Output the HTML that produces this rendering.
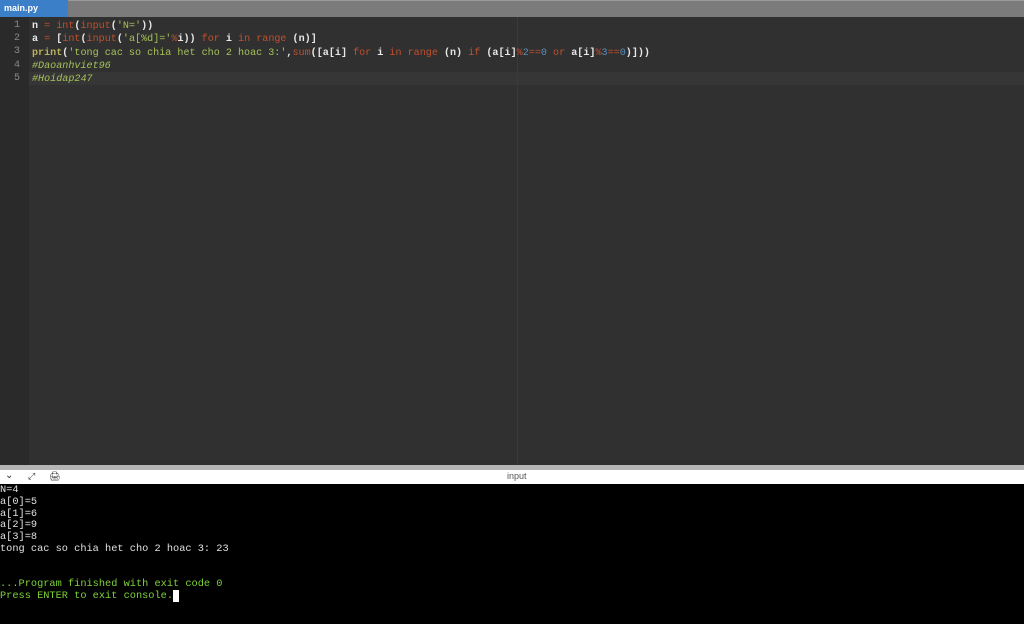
<!DOCTYPE html>
<html><head><style>
body{margin:0;width:1024px;height:624px;overflow:hidden;background:#000;position:relative;font-family:"Liberation Mono",monospace}
.top{position:absolute;left:0;top:0;width:1024px;height:17px;background:#7b7b7b;border-top:1px solid #999;box-sizing:border-box}
.tab{position:absolute;left:0;top:0;width:68px;height:17px;background:#3a7fc7;color:#fff;font:bold 9px "Liberation Sans",sans-serif;line-height:16px;padding-left:4px;box-sizing:border-box}
.ed{position:absolute;left:0;top:17px;width:1024px;height:448px;background:#303030}
.gut{position:absolute;left:0;top:0;width:29px;height:448px;background:#2a2a2a}
.vl{position:absolute;left:517px;top:0;width:1px;height:448px;background:#3a3a3a}
.cl{position:absolute;left:29px;top:55px;width:995px;height:13px;background:#363636}
.ln{position:absolute;left:0;width:20px;text-align:right;color:#8a8a8a;font-size:10px}
.code{position:absolute;left:32px;top:3px;font-size:10.1px;line-height:13.3px;color:#e8e8e8;white-space:pre;font-weight:bold}
.k{color:#c0502e;font-weight:normal}.s{color:#a6c25a;font-weight:normal}.c{color:#a6c25a;font-style:italic;font-weight:normal}.n{color:#5a8fc4;font-weight:normal}.p{color:#b8b05a}
.bar{position:absolute;left:0;top:465px;width:1024px;height:5px;background:#b5b5b5}
.tb{position:absolute;left:0;top:470px;width:1024px;height:14px;background:#fff;font:9px "Liberation Sans",sans-serif;color:#555}
.con{position:absolute;left:0;top:485px;font-size:10.3px;line-height:11.8px;color:#e0e0e0;white-space:pre}
.g{color:#7ed33a}
</style></head><body>
<div class="top"></div><div class="tab">main.py</div>
<div class="ed"><div class="gut"></div><div class="cl"></div><div class="vl"></div>
<div class="ln" style="top:3px">1</div><div class="ln" style="top:16px">2</div><div class="ln" style="top:29px">3</div><div class="ln" style="top:43px">4</div><div class="ln" style="top:56px">5</div>
<div class="code">n <span class="k">=</span> <span class="k">int</span>(<span class="k">input</span>(<span class="s">'N='</span>))
a <span class="k">=</span> [<span class="k">int</span>(<span class="k">input</span>(<span class="s">'a[%d]='</span><span class="k">%</span>i)) <span class="k">for</span> i <span class="k">in</span> <span class="k">range</span> (n)]
<span class="p">print</span>(<span class="s">'tong cac so chia het cho 2 hoac 3:'</span>,<span class="k">sum</span>([a[i] <span class="k">for</span> i <span class="k">in</span> <span class="k">range</span> (n) <span class="k">if</span> (a[i]<span class="k">%</span><span class="n">2</span><span class="k">==</span><span class="n">0</span> <span class="k">or</span> a[i]<span class="k">%</span><span class="n">3</span><span class="k">==</span><span class="n">0</span>)]))
<span class="c">#Daoanhviet96</span>
<span class="c">#Hoidap247</span></div></div>
<div class="bar"></div>
<div class="tb"><span style="position:absolute;left:5px;top:0;font-size:10px;color:#333">&#x2304;</span><span style="position:absolute;left:28px;top:1px;color:#333">&#x2922;</span><span style="position:absolute;left:49px;top:1px;color:#333">&#x1F5A8;</span><span style="position:absolute;left:507px;top:1px">input</span></div>
<div class="con">N=4
a[0]=5
a[1]=6
a[2]=9
a[3]=8
tong cac so chia het cho 2 hoac 3: 23


<span class="g">...Program finished with exit code 0
Press ENTER to exit console.</span><span style="background:#fff">&nbsp;</span></div>
</body></html>
